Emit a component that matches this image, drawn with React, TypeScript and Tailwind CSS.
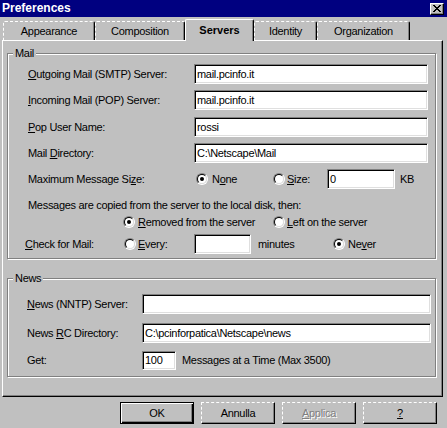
import React from "react";

const GRAY = "bg-[#c0c0c0]";

// sunken 3D edit field
const Field = ({ w, value = "", h = "h-[20px]" }: { w: string; value?: string; h?: string }) => (
  <div
    className={`${w} ${h} bg-white border border-t-[#808080] border-l-[#808080] border-r-white border-b-white shadow-[inset_1px_1px_0_#000,inset_-1px_-1px_0_#dfdfdf] flex items-center pl-[2px] overflow-hidden whitespace-nowrap`}
  >
    {value}
  </div>
);

const Radio = ({ checked = false }: { checked?: boolean }) => (
  <div className="w-[12px] h-[12px] shrink-0 rounded-full border border-t-[#808080] border-l-[#808080] border-r-white border-b-white">
    <div className="w-full h-full rounded-full bg-white border border-t-black border-l-black border-r-[#dfdfdf] border-b-[#dfdfdf] flex items-center justify-center">
      {checked && <div className="w-[4px] h-[4px] rounded-full bg-black" />}
    </div>
  </div>
);

const Tab = ({ label, w }: { label: string; w: string }) => (
  <div
    className={`${w} h-[19px] flex items-center justify-center pt-[1px] border-t border-l border-r border-dashed border-white [border-right-style:solid] border-r-black shadow-[inset_-1px_0_0_#808080] rounded-t-[2px]`}
  >
    {label}
  </div>
);

const Button = ({ children, primary = false }: { children: React.ReactNode; primary?: boolean }) =>
  primary ? (
    <div className="w-[74px] h-[22px] flex items-center justify-center border border-black shadow-[inset_1px_1px_0_#fff,inset_-1px_-1px_0_#000,inset_-2px_-2px_0_#808080]">
      {children}
    </div>
  ) : (
    <div className="w-[74px] h-[22px] flex items-center justify-center border border-dashed border-white [border-right-style:solid] [border-bottom-style:solid] border-r-black border-b-black shadow-[inset_-1px_-1px_0_#808080]">
      {children}
    </div>
  );

const GroupBox = ({ title, h, children }: { title: string; h: string; children: React.ReactNode }) => (
  <div
    className={`relative ml-[4px] w-[429px] ${h} border border-[#808080] shadow-[inset_1px_1px_0_#fff,1px_1px_0_#fff]`}
  >
    <span className={`absolute -top-[7px] left-[5px] px-[2px] ${GRAY}`}>{title}</span>
    {children}
  </div>
);

export default function App() {
  return (
    <div
      className={`w-[447px] h-[428px] ${GRAY} overflow-hidden text-black text-[11px] leading-[13px] tracking-[-0.3px] font-['Liberation_Sans',Arial,sans-serif]`}
    >
      {/* Title bar */}
      <div className="h-[17px] bg-[#000080] flex items-center justify-between pl-[2px] pr-[3px]">
        <span className="text-white font-bold text-[12px] tracking-normal">Preferences</span>
        <div className="w-[14px] h-[12px] bg-[#c0c0c0] flex items-center justify-center border-t border-l border-white border-r border-b border-r-black border-b-black shadow-[inset_-1px_-1px_0_#808080]">
          <svg width="8" height="7" viewBox="0 0 8 7" shapeRendering="crispEdges">
            <path d="M0 0h2v1h1v1h2V1h1V0h2v1H7v1H6v1H5v1h1v1h1v1h1v1H6V6H5V5H3v1H2v1H0V6h1V5h1V4h1V3H2V2H1V1H0z" fill="#000" />
          </svg>
        </div>
      </div>

      {/* Tabs */}
      <div className="flex items-end h-[21px] mt-[2px] pl-[3px]">
        <Tab label="Appearance" w="w-[92px]" />
        <Tab label="Composition" w="w-[90px]" />
        <div className="relative z-10 self-start w-[69px] h-[22px] bg-[#c0c0c0] flex items-center justify-center pb-[1px] font-bold tracking-normal border-t border-l border-r border-white border-r-black shadow-[inset_-1px_0_0_#808080] rounded-t-[2px]">
          Servers
        </div>
        <Tab label="Identity" w="w-[63px]" />
        <Tab label="Organization" w="w-[93px]" />
      </div>

      {/* Tab panel */}
      <div className="ml-[2px] w-[441px] h-[357px] border border-t-white border-l-white border-r-black border-b-black shadow-[inset_-1px_-1px_0_#808080] pt-[12px]">
        <GroupBox title="Mail" h="h-[206px]">
          <div className="pl-[20px] flex flex-col">
            <div className="flex items-center h-[20px] mt-[10px]">
              <span className="w-[166px]">
                <u>O</u>utgoing Mail (SMTP) Server:
              </span>
              <Field w="w-[234px]" value="mail.pcinfo.it" />
            </div>
            <div className="flex items-center h-[20px] mt-[6px]">
              <span className="w-[166px]">
                <u>I</u>ncoming Mail (POP) Server:
              </span>
              <Field w="w-[234px]" value="mail.pcinfo.it" />
            </div>
            <div className="flex items-center h-[20px] mt-[7px]">
              <span className="w-[166px]">
                <u>P</u>op User Name:
              </span>
              <Field w="w-[234px]" value="rossi" />
            </div>
            <div className="flex items-center h-[20px] mt-[6px]">
              <span className="w-[166px]">
                Mail <u>D</u>irectory:
              </span>
              <Field w="w-[234px]" value="C:\Netscape\Mail" />
            </div>
            <div className="flex items-center h-[20px] mt-[6px]">
              <span className="w-[168px]">
                Maximum Message Si<u>z</u>e:
              </span>
              <div className="w-[77px] flex items-center gap-[4px]">
                <Radio checked />
                <span>
                  N<u>o</u>ne
                </span>
              </div>
              <div className="w-[54px] flex items-center gap-[2px]">
                <Radio />
                <span>
                  <u>S</u>ize:
                </span>
              </div>
              <Field w="w-[68px]" value="0" />
              <span className="ml-[5px]">KB</span>
            </div>
            <div className="h-[13px] mt-[10px]">Messages are copied from the server to the local disk, then:</div>
            <div className="flex items-center h-[14px] mt-[3px] pl-[95px]">
              <div className="w-[150px] flex items-center gap-[3px]">
                <Radio checked />
                <span>
                  <u>R</u>emoved from the server
                </span>
              </div>
              <div className="flex items-center gap-[2px]">
                <Radio />
                <span>
                  <u>L</u>eft on the server
                </span>
              </div>
            </div>
            <div className="flex items-center h-[20px] mt-[5px] -ml-[3px]">
              <span className="w-[99px]">
                <u>C</u>heck for Mail:
              </span>
              <div className="w-[70px] flex items-center gap-[2px]">
                <Radio />
                <span>
                  <u>E</u>very:
                </span>
              </div>
              <Field w="w-[57px]" />
              <span className="w-[82px] pl-[7px]">minutes</span>
              <div className="flex items-center gap-[3px]">
                <Radio checked />
                <span>
                  Ne<u>v</u>er
                </span>
              </div>
            </div>
          </div>
        </GroupBox>

        <div className="h-[19px]" />

        <GroupBox title="News" h="h-[99px]">
          <div className="pl-[19px] flex flex-col">
            <div className="flex items-center h-[20px] mt-[15px]">
              <span className="w-[115px]">
                <u>N</u>ews (NNTP) Server:
              </span>
              <Field w="w-[289px]" />
            </div>
            <div className="flex items-center h-[20px] mt-[9px]">
              <span className="w-[115px]">
                News <u>R</u>C Directory:
              </span>
              <Field w="w-[289px]" value="C:\pcinforpatica\Netscape\news" />
            </div>
            <div className="flex items-center h-[20px] mt-[7px]">
              <span className="w-[115px]">Get:</span>
              <Field w="w-[34px]" value="100" h="h-[19px]" />
              <span className="ml-[6px]">Messages at a Time (Max 3500)</span>
            </div>
          </div>
        </GroupBox>
      </div>

      {/* Buttons */}
      <div className="flex gap-[7px] mt-[5px] pl-[120px]">
        <Button primary>OK</Button>
        <Button>Annulla</Button>
        <Button>
          <span className="text-[#808080] [text-shadow:1px_1px_0_#fff]">
            <u>A</u>pplica
          </span>
        </Button>
        <Button>
          <u>?</u>
        </Button>
      </div>
    </div>
  );
}
